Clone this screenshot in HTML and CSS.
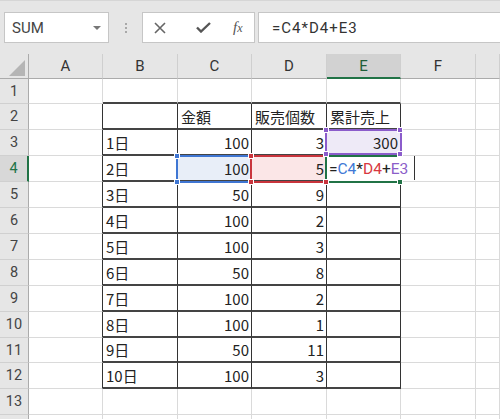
FILE: index.html
```html
<!DOCTYPE html>
<html>
<head>
<meta charset="utf-8">
<link rel="stylesheet" href="styles.css">
</head>
<body>
<div class="app">
  <div class="fbar">
    <div class="namebox"><span>SUM</span><span class="arrow"></span></div>
    <div class="sep"><i></i><i></i><i></i></div>
    <div class="btns">
      <span class="btn"><svg width="12" height="12" viewBox="0 0 12 12"><path d="M1 1L11 11M11 1L1 11" stroke="#666" stroke-width="1.6" fill="none"/></svg></span>
      <span class="btn"><svg width="15" height="11" viewBox="0 0 15 11"><path d="M1 5.5L5 9.5L14 1" stroke="#555" stroke-width="2.4" fill="none"/></svg></span>
      <span class="btn fx">f<span class="x">x</span></span>
    </div>
    <div class="input">=C4*D4+E3</div>
  </div>

  <div class="sheet">
    <div class="corner"><svg width="28" height="24" viewBox="0 0 28 24"><path d="M25 6V22H9Z" fill="#b5b5b5"/></svg></div>
    <div class="ch">A</div><div class="ch">B</div><div class="ch">C</div><div class="ch">D</div><div class="ch sel">E</div><div class="ch">F</div><div class="ch"></div>

    <div class="rh">1</div><div class="c"></div><div class="c bb"></div><div class="c bb"></div><div class="c bb"></div><div class="c bb"></div><div class="c"></div><div class="c"></div>

    <div class="rh">2</div><div class="c br"></div><div class="c t"></div><div class="c t">金額</div><div class="c t">販売個数</div><div class="c t">累計売上</div><div class="c"></div><div class="c"></div>

    <div class="rh">3</div><div class="c br"></div><div class="c t">1日</div><div class="c t n">100</div><div class="c t n">3</div><div class="c t n fp">300</div><div class="c"></div><div class="c"></div>

    <div class="rh rsel">4</div><div class="c br"></div><div class="c t">2日</div><div class="c t n fb">100</div><div class="c t n fr">5</div><div class="c t"></div><div class="c"></div><div class="c"></div>

    <div class="rh">5</div><div class="c br"></div><div class="c t">3日</div><div class="c t n">50</div><div class="c t n">9</div><div class="c t"></div><div class="c"></div><div class="c"></div>

    <div class="rh">6</div><div class="c br"></div><div class="c t">4日</div><div class="c t n">100</div><div class="c t n">2</div><div class="c t"></div><div class="c"></div><div class="c"></div>

    <div class="rh">7</div><div class="c br"></div><div class="c t">5日</div><div class="c t n">100</div><div class="c t n">3</div><div class="c t"></div><div class="c"></div><div class="c"></div>

    <div class="rh">8</div><div class="c br"></div><div class="c t">6日</div><div class="c t n">50</div><div class="c t n">8</div><div class="c t"></div><div class="c"></div><div class="c"></div>

    <div class="rh">9</div><div class="c br"></div><div class="c t">7日</div><div class="c t n">100</div><div class="c t n">2</div><div class="c t"></div><div class="c"></div><div class="c"></div>

    <div class="rh">10</div><div class="c br"></div><div class="c t">8日</div><div class="c t n">100</div><div class="c t n">1</div><div class="c t"></div><div class="c"></div><div class="c"></div>

    <div class="rh">11</div><div class="c br"></div><div class="c t">9日</div><div class="c t n">50</div><div class="c t n">11</div><div class="c t"></div><div class="c"></div><div class="c"></div>

    <div class="rh">12</div><div class="c br"></div><div class="c t">10日</div><div class="c t n">100</div><div class="c t n">3</div><div class="c t"></div><div class="c"></div><div class="c"></div>

    <div class="rh">13</div><div class="c"></div><div class="c"></div><div class="c"></div><div class="c"></div><div class="c"></div><div class="c"></div><div class="c"></div>

    <div class="rh"></div><div class="c"></div><div class="c"></div><div class="c"></div><div class="c"></div><div class="c"></div><div class="c"></div><div class="c"></div>

    <!-- reference overlays -->
    <div class="ref blue"></div>
    <div class="ref red"></div>
    <div class="ref purple"></div>
    <div class="editor"><span>=</span><span class="cb">C4</span><span>*</span><span class="cr">D4</span><span>+</span><span class="cp">E3</span></div>
    <div class="active"></div>
    <div class="caret"></div>

    <i class="h hb" style="left:174px;top:99px"></i>
    <i class="h hb" style="left:174px;top:125px"></i>
    <i class="h hr" style="left:248px;top:99px"></i>
    <i class="h hr" style="left:248px;top:125px"></i>
    <i class="h hr" style="left:323px;top:125px"></i>
    <i class="h hp" style="left:323px;top:73px"></i>
    <i class="h hp" style="left:397px;top:73px"></i>
    <i class="h hp" style="left:323px;top:97px"></i>
    <i class="h hp" style="left:397px;top:97px"></i>
    <i class="h hg" style="left:397px;top:125px"></i>
  </div>
</div>
</body>
</html>
```

FILE: styles.css
```css
html, body {
  margin: 0;
  padding: 0;
}
body {
  width: 500px;
  height: 419px;
  overflow: hidden;
  background: #fff;
  font-family: "Noto Sans CJK JP", sans-serif;
  color: #222;
}
.app {
  width: 500px;
  height: 419px;
  overflow: hidden;
}

/* formula bar */
.fbar {
  height: 54px;
  box-sizing: border-box;
  background: #e6e6e6;
  border-top: 1px solid #d6d6d6;
  padding: 11px 0 0 4px;
  display: flex;
  align-items: flex-start;
}
.namebox {
  width: 105px;
  height: 31px;
  box-sizing: border-box;
  background: #fff;
  border: 1px solid #c6c6c6;
  display: flex;
  align-items: center;
  padding: 0 7px 0 7px;
  font: 15px "Roboto", sans-serif;
  color: #444;
}
.arrow {
  margin-left: auto;
  width: 0;
  height: 0;
  border-left: 4px solid transparent;
  border-right: 4px solid transparent;
  border-top: 4px solid #777;
}
.sep {
  width: 33px;
  height: 31px;
  display: flex;
  flex-direction: column;
  align-items: center;
  justify-content: center;
  gap: 2px;
}
.sep i {
  width: 2px;
  height: 2px;
  background: #a8a8a8;
}
.btns {
  width: 113px;
  height: 31px;
  box-sizing: border-box;
  background: #fff;
  border: 1px solid #c6c6c6;
  display: flex;
  align-items: center;
  padding-left: 11px;
}
.btn {
  display: flex;
  align-items: center;
  justify-content: center;
  height: 100%;
}
.btn:nth-child(1) { width: 12px; }
.btn:nth-child(2) { width: 15px; margin-left: 30px; }
.fx {
  margin-left: 22px;
  font: italic 15px "Liberation Serif", serif;
  color: #555;
}
.fx .x {
  font-size: 12px;
  position: relative;
  top: 1px;
}
.input {
  flex: 1;
  margin-left: 3px;
  height: 31px;
  box-sizing: border-box;
  background: #fff;
  border: 1px solid #c6c6c6;
  border-right: none;
  padding-left: 13px;
  display: flex;
  align-items: center;
  font: 15px "Roboto", sans-serif;
  letter-spacing: 1px;
  color: #333;
}

/* sheet */
.sheet {
  position: relative;
  display: grid;
  grid-template-columns: 29px 74px 75px 74px 75px 74px 75px 24px;
  grid-template-rows: 25px 25px 26px 26px 26px 26px 26px 26px 26px 26px 26px 25px 26px 26px 26px;
}
.corner {
  background: #e6e6e6;
  border-right: 1px solid #ababab;
  border-bottom: 1px solid #ababab;
  box-sizing: border-box;
}
.corner svg { display: block; }
.ch {
  background: #e6e6e6;
  border-right: 1px solid #cfcfcf;
  border-bottom: 1px solid #ababab;
  box-sizing: border-box;
  display: flex;
  align-items: center;
  justify-content: center;
  font: 15px "Roboto", sans-serif;
  color: #333;
}
.ch.sel {
  background: #d2d2d2;
  border-bottom: 2px solid #217346;
  color: #1f5e38;
}
.rh {
  background: #e6e6e6;
  border-right: 1px solid #ababab;
  border-bottom: 1px solid #d0d0d0;
  box-sizing: border-box;
  display: flex;
  align-items: center;
  justify-content: center;
  font: 14.5px "Roboto", sans-serif;
  color: #444;
}
.rh.rsel {
  background: #d8d8d8;
  border-right: 2px solid #217346;
  color: #217346;
}
.c {
  border-right: 1px solid #dadada;
  border-bottom: 1px solid #dadada;
  box-sizing: border-box;
  display: flex;
  align-items: center;
  padding: 0 2px 0 3px;
  font-size: 15px;
  white-space: nowrap;
  overflow: hidden;
  color: #222;
}
.c.n { justify-content: flex-end; }
.c.bb { border-bottom: 2px solid #444; }
.c.br { border-right: 1px solid #333; }
.c.t {
  border-right: 1px solid #333;
  border-bottom: 2px solid #444;
}
.c.fb { background: #e8eef8; }
.c.fr { background: #fbe6e7; }
.c.fp { background: #eeeaf7; }

/* reference boxes */
.ref {
  position: absolute;
  box-sizing: border-box;
  border: 2px solid;
  pointer-events: none;
}
.ref.blue { left: 176px; top: 101px; width: 76px; height: 28px; border-color: #3f76d3; }
.ref.red { left: 250px; top: 101px; width: 77px; height: 28px; border-color: #c9343c; }
.ref.purple { left: 325px; top: 75px; width: 77px; height: 26px; border-color: #8b5ccb; }
.editor {
  position: absolute;
  left: 327px;
  top: 103px;
  width: 88px;
  height: 24px;
  background: #fff;
  display: flex;
  align-items: center;
  padding-left: 2px;
  box-sizing: border-box;
  font: 15.5px "Roboto", sans-serif;
  color: #222;
  white-space: nowrap;
}
.cb { color: #4078d6; }
.cr { color: #d8373f; }
.cp { color: #8c5ec9; }
.active {
  position: absolute;
  left: 325px;
  top: 101px;
  width: 77px;
  height: 28px;
  box-sizing: border-box;
  border: 2px solid #217346;
  border-right: none;
}
.caret {
  position: absolute;
  left: 414px;
  top: 102px;
  width: 1px;
  height: 24px;
  background: #333;
}
.h {
  position: absolute;
  width: 6px;
  height: 6px;
  box-sizing: border-box;
  border: 1px solid #fff;
}
.hb { background: #3f76d3; }
.hr { background: #c9343c; }
.hp { background: #8b5ccb; }
.hg { background: #217346; }
```
